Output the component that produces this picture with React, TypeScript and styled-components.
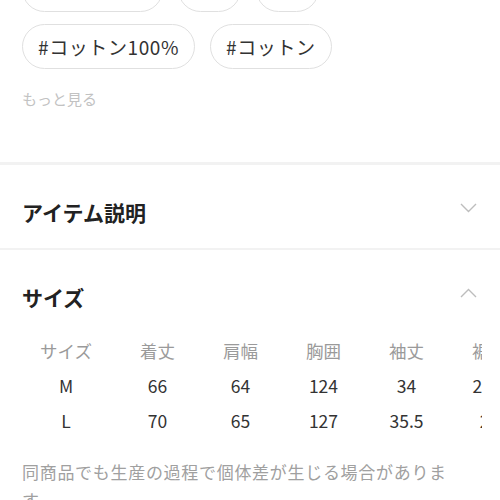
import React from "react";
import styled, { createGlobalStyle } from "styled-components";

const GlobalStyle = createGlobalStyle`
  html, body {
    margin: 0;
    padding: 0;
    background: #fff;
  }
  body {
    width: 500px;
    height: 500px;
    overflow: hidden;
    font-family: "Noto Sans CJK JP", "Noto Sans", sans-serif;
    color: #333;
  }
`;

const Page = styled.div`
  width: 500px;
  margin-top: -33px;
`;

const TagArea = styled.div`
  padding: 0 22px;
  display: flex;
  flex-direction: column;
  gap: 12px;
`;

const TagRow = styled.div`
  display: flex;
  gap: 15px;
`;

const Tag = styled.span`
  display: inline-flex;
  align-items: center;
  height: 45px;
  box-sizing: border-box;
  padding: 0 15px;
  border: 1px solid #e0e0e0;
  border-radius: 23px;
  font-size: 19px;
  letter-spacing: 0.6px;
  color: #333;
  white-space: nowrap;
`;

const MoreLink = styled.div`
  margin: 19px 22px 0;
  font-size: 15px;
  line-height: 22px;
  color: #c2c2c2;
`;

const Divider = styled.div<{ $thick?: boolean }>`
  height: ${(p) => (p.$thick ? "3px" : "2px")};
  background: #f2f2f2;
  margin-top: ${(p) => (p.$thick ? "52px" : "0")};
`;

const SectionHead = styled.div`
  display: flex;
  align-items: center;
  justify-content: space-between;
  padding: 0 23px 0 22px;
  height: 83px;
`;

const SectionTitle = styled.h2`
  margin: 0;
  padding-top: 10px;
  font-size: 21px;
  font-weight: 700;
  color: #222;
`;

const Chevron = styled.svg`
  width: 17px;
  height: 10px;
  margin-top: 2px;
`;

const TableWrap = styled.div`
  margin-right: 18px;
  padding-left: 16px;
  overflow: hidden;
`;

const SizeTable = styled.table`
  border-collapse: collapse;
  font-size: 17.5px;
  white-space: nowrap;
`;

const Cell = styled.td<{ $head?: boolean }>`
  padding: 0 24px;
  height: 35px;
  text-align: center;
  color: ${(p) => (p.$head ? "#9a9a9a" : "#333")};
`;

const Note = styled.p`
  margin: 20px 0 0 22px;
  max-width: 440px;
  font-size: 17px;
  letter-spacing: 0.7px;
  line-height: 28px;
  color: #a0a0a0;
`;

const ChevronIcon = ({ up }: { up?: boolean }) => (
  <Chevron viewBox="0 0 17 10">
    <polyline
      points={up ? "1,9 8.5,1.5 16,9" : "1,1 8.5,8.5 16,1"}
      fill="none"
      stroke="#bdbdbd"
      strokeWidth="1.4"
    />
  </Chevron>
);

const heads = ["サイズ", "着丈", "肩幅", "胸囲", "袖丈", "裾幅"];
const rows = [
  ["M", "66", "64", "124", "34", "22.5"],
  ["L", "70", "65", "127", "35.5", "24"],
];

export default function App() {
  return (
    <>
      <GlobalStyle />
      <Page>
        <TagArea>
          <TagRow>
            <Tag>#カットソー</Tag>
            <Tag>#白</Tag>
            <Tag>#夏</Tag>
          </TagRow>
          <TagRow>
            <Tag>#コットン100%</Tag>
            <Tag>#コットン</Tag>
          </TagRow>
        </TagArea>
        <MoreLink>もっと見る</MoreLink>
        <Divider $thick />
        <SectionHead>
          <SectionTitle>アイテム説明</SectionTitle>
          <ChevronIcon />
        </SectionHead>
        <Divider />
        <SectionHead>
          <SectionTitle>サイズ</SectionTitle>
          <ChevronIcon up />
        </SectionHead>
        <TableWrap>
          <SizeTable>
            <tbody>
              <tr>
                {heads.map((h) => (
                  <Cell key={h} $head>
                    {h}
                  </Cell>
                ))}
              </tr>
              {rows.map((r) => (
                <tr key={r[0]}>
                  {r.map((v, i) => (
                    <Cell key={i}>{v}</Cell>
                  ))}
                </tr>
              ))}
            </tbody>
          </SizeTable>
        </TableWrap>
        <Note>同商品でも生産の過程で個体差が生じる場合があります。</Note>
      </Page>
    </>
  );
}
